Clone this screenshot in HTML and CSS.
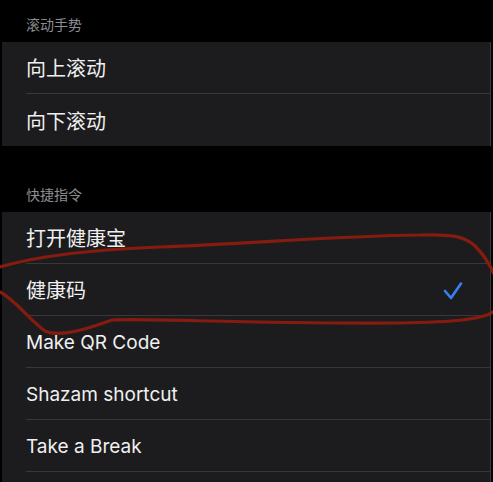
FILE: index.html
```html
<!DOCTYPE html>
<html lang="zh-CN">
<head>
<meta charset="utf-8">
<link rel="stylesheet" href="styles.css">
</head>
<body>
<div class="page">
  <div class="header header-first">滚动手势</div>
  <div class="group">
    <div class="row"><span class="label">向上滚动</span></div>
    <div class="row"><span class="label">向下滚动</span></div>
  </div>
  <div class="header header-second">快捷指令</div>
  <div class="group">
    <div class="row"><span class="label">打开健康宝</span></div>
    <div class="row"><span class="label">健康码</span>
      <svg class="check" width="20" height="18" viewBox="0 0 20 18"><polyline points="2,9 8,16 18,1.5" fill="none" stroke="#3680f2" stroke-width="2.6" stroke-linecap="round" stroke-linejoin="round"/></svg>
    </div>
    <div class="row"><span class="label en">Make QR Code</span></div>
    <div class="row"><span class="label en">Shazam shortcut</span></div>
    <div class="row"><span class="label en">Take a Break</span></div>
    <div class="row"><span class="label">&nbsp;</span></div>
  </div>
  <svg class="scribble" width="493" height="482" viewBox="0 0 493 482">
    <path d="M0 267 C30 258 80 250 160 247 C250 244 330 236 420 235 C450 234 465 236 475 246 C485 256 490 265 494 274" fill="none" stroke="#861b10" stroke-width="3.2" stroke-linecap="round"/>
    <path d="M0 292 C15 300 30 320 45 331 C60 338 90 328 112 320 C150 318 250 324 400 323 C450 322 485 320 494 311" fill="none" stroke="#861b10" stroke-width="3.2" stroke-linecap="round"/>
  </svg>
</div>
</body>
</html>
```

FILE: styles.css
```css
html, body {
  margin: 0;
  padding: 0;
  background: #000;
}
body {
  font-family: Inter, "Noto Sans CJK SC", sans-serif;
  overflow: hidden;
  height: 482px;
}
.page {
  position: relative;
  width: 493px;
}
.header {
  display: flex;
  align-items: flex-end;
  padding-left: 26px;
  font-size: 14px;
  line-height: 18px;
  color: #8d8d92;
  box-sizing: border-box;
}
.header-first {
  height: 42px;
  padding-bottom: 8px;
}
.header-second {
  height: 66px;
  padding-bottom: 8px;
}
.group {
  background: #1c1c1e;
  margin: 0 2px;
  padding-left: 24px;
  border-right: 1px solid #3a3a3c;
}
.row {
  height: 52px;
  box-sizing: border-box;
  display: flex;
  align-items: center;
  justify-content: space-between;
  padding-right: 27px;
  border-bottom: 1px solid #38383a;
  color: #f0f0f0;
  font-size: 20px;
}
.row:last-child {
  border-bottom: none;
}
.label {
  line-height: 24px;
  margin-top: 3px;
}
.en {
  font-size: 19px;
}
.check {
  display: block;
  margin-top: 2px;
}
.scribble {
  position: absolute;
  left: 0;
  top: 0;
  pointer-events: none;
}
```
